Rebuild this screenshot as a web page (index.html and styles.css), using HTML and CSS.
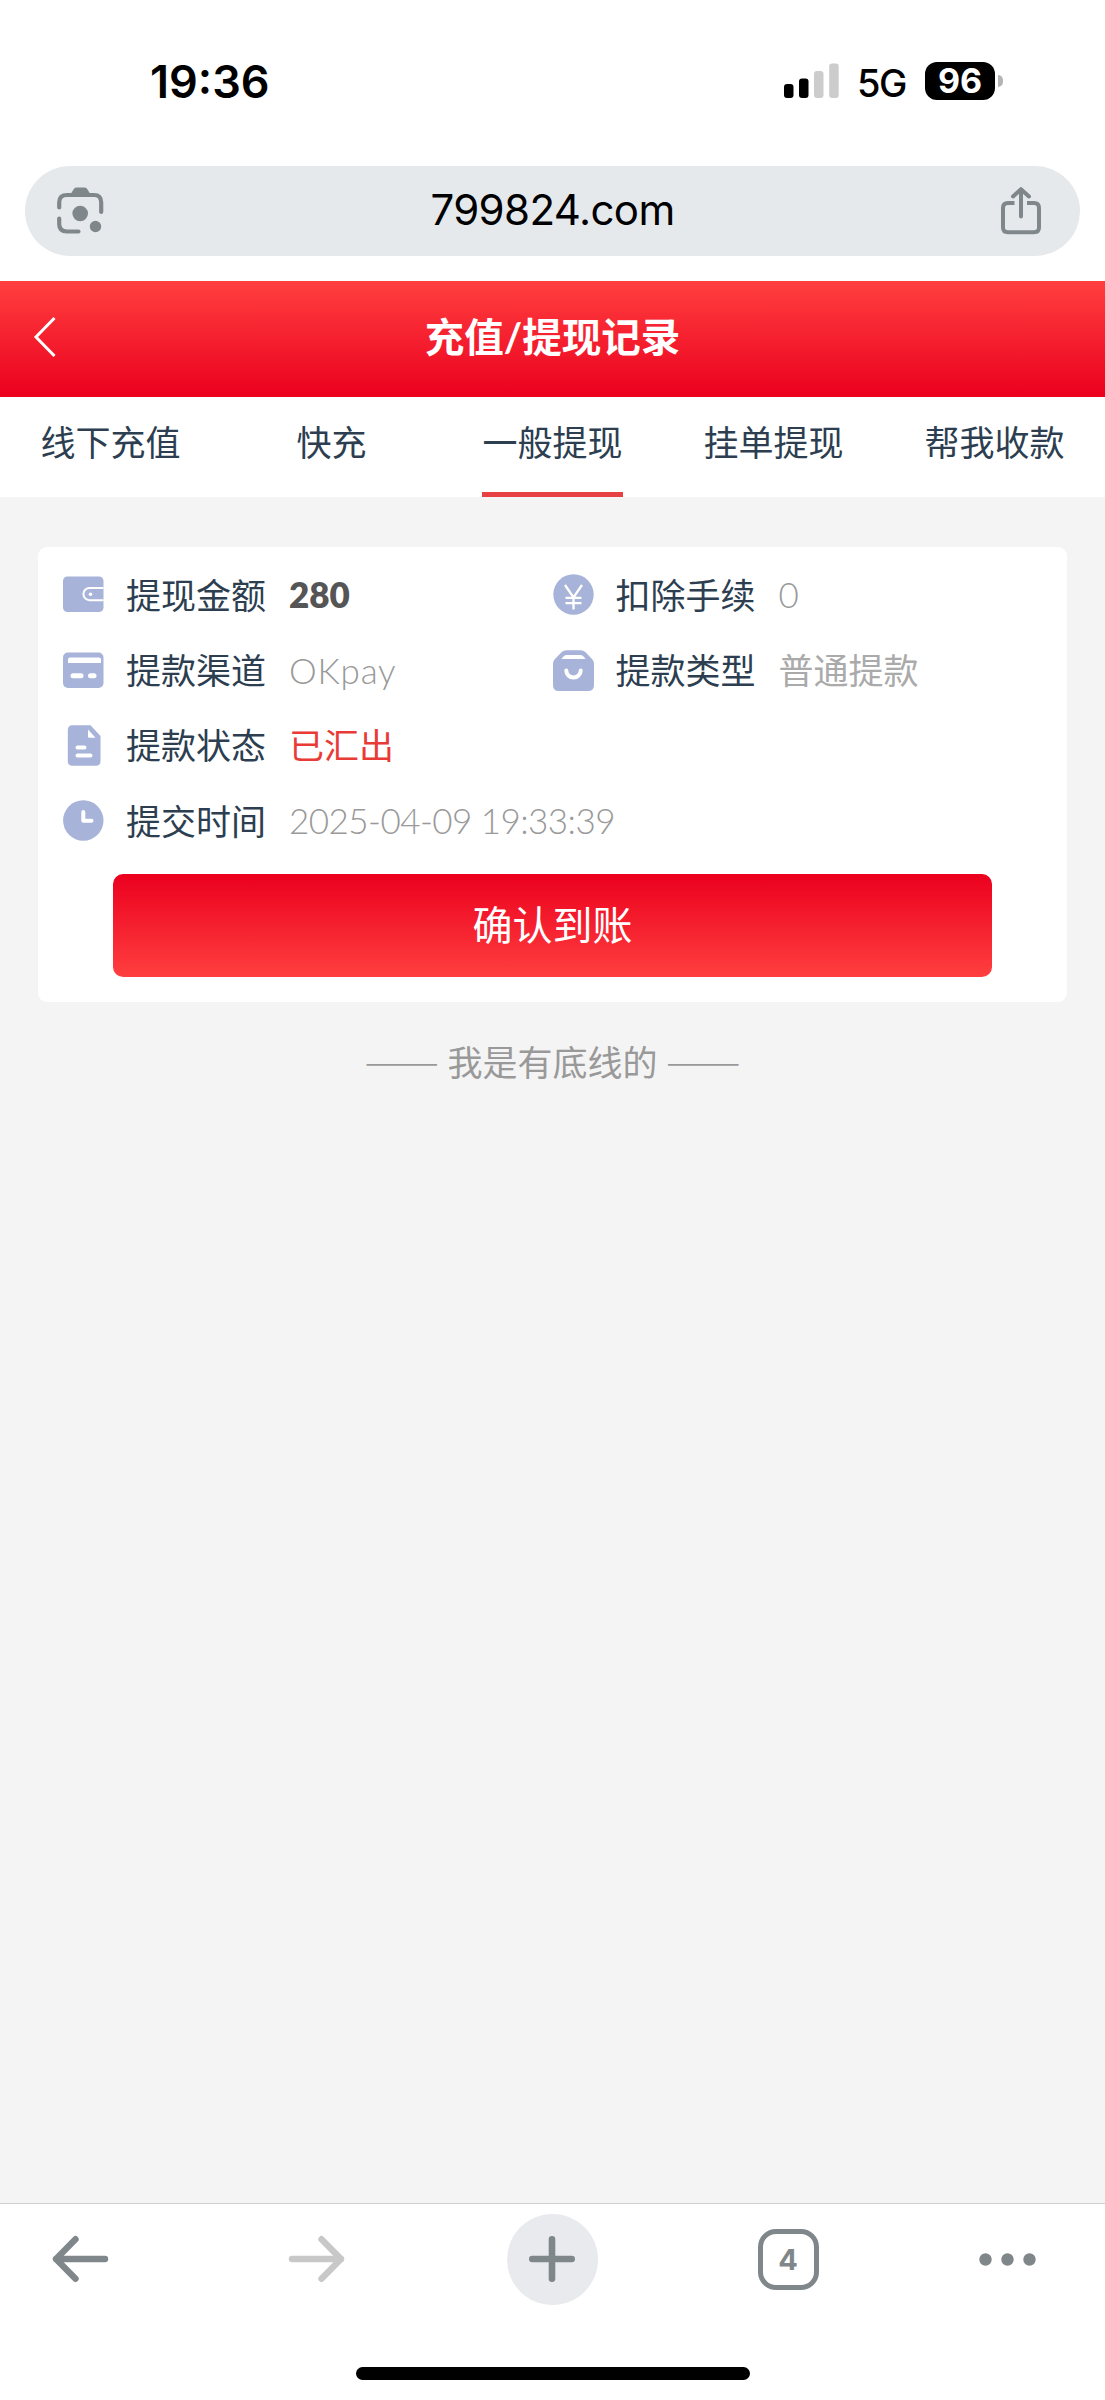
FILE: index.html
```html
<!DOCTYPE html>
<html lang="zh-CN">
<head>
<meta charset="utf-8">
<title>充值/提现记录</title>
<link rel="stylesheet" href="styles.css">
</head>
<body>
<div class="statusbar">
  <span class="clock">19:36</span>
  <div class="indicators">
    <svg class="signal" width="55" height="36" viewBox="0 0 55 36">
      <rect x="0" y="21" width="9.5" height="14" rx="3"/>
      <rect x="15" y="15.5" width="9.5" height="19.5" rx="3"/>
      <rect class="off" x="30" y="8" width="9.5" height="27" rx="3"/>
      <rect class="off" x="45.2" y="0.5" width="9.5" height="34.5" rx="3"/>
    </svg>
    <span class="network">5G</span>
    <span class="battery">96</span>
    <span class="battery-tip"></span>
  </div>
</div>
<div class="urlbar">
  <svg class="lens" width="48" height="48" viewBox="0 0 48 48">
    <path d="M14 6.5 17 1.8Q18 .5 19.5 .5H27.500Q29 .5 30 1.800L33 6.500Z" fill="#80878a"/>
    <path d="M2.200 20.500V15.500Q2.200 8 10 8H37Q44.200 8 44.200 15.500V25M2.200 31.500V37Q2.200 44.500 10 44.500H21.500" fill="none" stroke="#80878a" stroke-width="4.200" stroke-linecap="round"/>
    <circle cx="23.200" cy="26.500" r="7.800" fill="#80878a"/>
    <circle cx="38.500" cy="39.500" r="5.700" fill="#80878a"/>
  </svg>
  <span class="url">799824.com</span>
  <svg class="share" width="42" height="48" viewBox="0 0 42 48" fill="none" stroke="#80878a" stroke-width="4">
    <path d="M14.500 16H8Q3 16 3 21V40.500Q3 45.200 8 45.200H34Q39 45.200 39 40.500V21Q39 16 34 16H27"/>
    <path d="M21 29.500V2.500M13 9.500 21 2.200 29 9.500" stroke-linecap="round" stroke-linejoin="round"/>
  </svg>
</div>
<header class="header">
  <svg class="back" width="24" height="42" viewBox="0 0 24 42"><path d="M21.500 2 3 21 21.500 40" fill="none" stroke="#fff" stroke-width="3"/></svg>
  <h1 class="title">充值/提现记录</h1>
</header>
<nav class="tabs">
  <a class="tab"><span class="tab-label">线下充值</span></a>
  <a class="tab"><span class="tab-label">快充</span></a>
  <a class="tab"><span class="tab-label tab-active">一般提现</span></a>
  <a class="tab"><span class="tab-label">挂单提现</span></a>
  <a class="tab"><span class="tab-label">帮我收款</span></a>
</nav>
<main class="content">
  <section class="card">
    <div class="fields">
      <div class="field">
        <svg class="icon" viewBox="0 0 41 41"><rect x="0" y="2.500" width="40.500" height="35.500" rx="4.500" fill="#a7b3d9"/><path d="M40.500 14H26.500a6.100 6.100 0 0 0 0 12.200H40.500" fill="none" stroke="#fff" stroke-width="2"/><circle cx="27.500" cy="20.200" r="1.800" fill="#fff"/></svg>
        <span class="label">提现金额</span><span class="value amount">280</span>
      </div>
      <div class="field">
        <svg class="icon" viewBox="0 0 41 41"><circle cx="20.500" cy="20.500" r="20.200" fill="#a7b3d9"/><path d="M12 11 20.500 23.500 29 11M20.500 23V35.500M12.500 23.800H28.500M12.500 29.200H28.500" fill="none" stroke="#fff" stroke-width="2.300"/></svg>
        <span class="label">扣除手续</span><span class="value number">0</span>
      </div>
      <div class="field">
        <svg class="icon" viewBox="0 0 41 41"><rect x="0" y="2.500" width="40.500" height="35.500" rx="5" fill="#a7b3d9"/><path d="M5 13V9.500Q5 7.500 7 7.500H36Q38 7.500 38 9.500V13Z" fill="#fff"/><path d="M10 25.700H18M27.500 25.700H31" stroke="#fff" stroke-width="5" stroke-linecap="round"/></svg>
        <span class="label">提款渠道</span><span class="value channel">OKpay</span>
      </div>
      <div class="field">
        <svg class="icon" viewBox="0 0 41 41"><path d="M0 13.500Q0 11 2 9L8.500 2.200Q10.500 .2 13.500 .2H27.500Q30.500 .2 32.500 2.200L39 9Q41 11 41 13.500V35Q41 41 35 41H6Q0 41 0 35Z" fill="#a7b3d9"/><path d="M8.500 9Q11 5 13.500 5H27.500Q30 5 32.500 9Z" fill="#fff"/><path d="M13.300 20.500a7.200 7 0 0 0 14.400 0" fill="none" stroke="#fff" stroke-width="4" stroke-linecap="round"/></svg>
        <span class="label">提款类型</span><span class="value">普通提款</span>
      </div>
      <div class="field field-wide">
        <svg class="icon" viewBox="0 0 41 41"><path d="M4.800 5Q4.800 .2 9.500 .2H27.500L37.500 11V36Q37.500 40.800 33 40.800H9.500Q4.800 40.800 4.800 36Z" fill="#a7b3d9"/><path d="M25 4.500V11.500Q25 12.700 26.200 12.700H32.500Z" fill="#fff"/><path d="M14.500 22.500H21.500M14.500 30.500H27.500" stroke="#fff" stroke-width="4" stroke-linecap="round"/></svg>
        <span class="label">提款状态</span><span class="value status">已汇出</span>
      </div>
      <div class="field field-wide">
        <svg class="icon" viewBox="0 0 41 41"><circle cx="20.300" cy="20.500" r="20.200" fill="#a7b3d9"/><path d="M20.300 12V20.700H28.500" fill="none" stroke="#fff" stroke-width="4" stroke-linecap="round" stroke-linejoin="round"/></svg>
        <span class="label">提交时间</span><span class="value date">2025-04-09 19:33:39</span>
      </div>
    </div>
    <button class="confirm">确认到账</button>
  </section>
  <p class="end"><span class="dash">——</span> 我是有底线的 <span class="dash">——</span></p>
</main>
<footer class="toolbar">
  <div class="tools">
    <div class="tool"><svg width="57" height="50" viewBox="0 0 57 50" fill="none" stroke="#80878a" stroke-width="6.400" stroke-linecap="round" stroke-linejoin="round"><path d="M53 25H4M23.500 5.200 4 25 23.500 44.800"/></svg></div>
    <div class="tool"><svg width="57" height="50" viewBox="0 0 57 50" fill="none" stroke="#c8c8c8" stroke-width="6.400" stroke-linecap="round" stroke-linejoin="round"><path d="M4 25H53M33.500 5.200 53 25 33.500 44.800"/></svg></div>
    <div class="tool"><span class="new-tab"><svg width="46" height="46" viewBox="0 0 46 46" stroke="#80878a" stroke-width="6.600" stroke-linecap="round"><path d="M3.300 23H42.700M23 3.300V42.700"/></svg></span></div>
    <div class="tool"><span class="tab-count">4</span></div>
    <div class="tool tool-more"><svg width="57" height="13" viewBox="0 0 57 13" fill="#80878a"><circle cx="6.500" cy="6.500" r="6.200"/><circle cx="28.500" cy="6.500" r="6.200"/><circle cx="50.500" cy="6.500" r="6.200"/></svg></div>
  </div>
  <div class="home-indicator"></div>
</footer>
</body>
</html>
```
FILE: styles.css
```css
* { box-sizing: border-box; }
body {
  margin: 0;
  width: 1105px;
  height: 2400px;
  display: flex;
  flex-direction: column;
  background: #fff;
  color: #2c3e50;
  font-family: Lato, "Noto Sans CJK SC", sans-serif;
  font-size: 35px;
}
svg { display: block; flex: none; }

.statusbar {
  height: 166px;
  flex: none;
  display: flex;
  justify-content: space-between;
  padding: 57px 102px 0 150px;
  color: #000;
  font-family: Inter, sans-serif;
}
.clock { font-size: 45px; font-weight: 600; line-height: 50px; }
.indicators { display: flex; align-items: flex-start; }
.signal { margin-top: 6px; }
.signal .off { fill: #ccc; }
.network { width: 86px; padding-left: 18px; font-size: 38px; font-weight: 500; line-height: 52px; letter-spacing: -1.5px; white-space: nowrap; }
.battery {
  width: 70px;
  height: 38px;
  margin-top: 5px;
  border-radius: 12px;
  background: #000;
  color: #fff;
  font-size: 34px;
  font-weight: 700;
  line-height: 38px;
  text-align: center;
}
.battery-tip { width: 5px; height: 12px; margin: 18px 0 0 3px; border-radius: 0 5px 5px 0; background: #b5b5b5; }

.urlbar {
  height: 90px;
  flex: none;
  margin: 0 25px 25px;
  padding: 0 38px 0 32px;
  border-radius: 45px;
  background: #e6e9ec;
  display: flex;
  align-items: center;
  justify-content: space-between;
}
.url { color: #000; font-family: Inter, sans-serif; font-size: 42px; line-height: 50px; letter-spacing: -0.6px; margin-top: -3px; }

.header {
  height: 116px;
  flex: none;
  padding: 0 33px;
  display: grid;
  grid-template-columns: 24px 1fr 24px;
  align-items: center;
  background: linear-gradient(#ff3f3f, #eb001e);
}
.back { margin-top: -4px; }
.title { margin: -5px 0 0; color: #fff; font-size: 39.5px; font-weight: 700; line-height: 60px; text-align: center; }

.tabs { height: 100px; flex: none; display: grid; grid-template-columns: repeat(5, 1fr); background: #fff; }
.tab { display: flex; justify-content: center; }
.tab-label { height: 100px; line-height: 90px; border-bottom: 5px solid transparent; }
.tab-active { border-color: #e84144; }

.content { flex: 1; padding: 50px 38px 0; background: #f4f4f4; }
.card { height: 455px; padding: 10px 25px 0; border-radius: 9px; background: #fff; }
.fields { display: grid; grid-template-columns: 489.5px 1fr; grid-auto-rows: 75.4px; }
.field { display: flex; align-items: center; white-space: nowrap; }
.field-wide { grid-column: 1 / -1; }
.icon { width: 41px; height: 41px; margin-right: 22px; }
.label { width: 163px; padding-bottom: 3px; }
.value { padding-bottom: 3px; color: #aaa; }
.number, .channel, .date { padding-bottom: 1px; color: #999; font-weight: 300; }
.channel { letter-spacing: 0.8px; }
.date { letter-spacing: -0.55px; }
.amount { padding-bottom: 1px; color: #555; font-weight: 800; }
.status { color: #e93b35; }
.confirm {
  display: block;
  width: 879px;
  height: 103px;
  margin: 15px auto 0;
  padding: 0 0 4px;
  border: 0;
  border-radius: 10px;
  background: linear-gradient(#eb001e, #ff3f3f);
  color: #fff;
  font-family: inherit;
  font-size: 40px;
}
.end { margin: 34px 0 0; color: #999; font-family: "Noto Sans CJK SC", sans-serif; line-height: 50px; text-align: center; }
.dash { font-size: 38px; font-weight: 500; line-height: 1; vertical-align: -3px; }

.toolbar { height: 197px; flex: none; border-top: 1px solid #cfd0d1; background: #fff; }
.tools { height: 110px; display: flex; gap: 145px; padding: 0 34.5px; }
.tool { width: 91px; flex: none; display: flex; align-items: center; justify-content: center; }
.tool-more { width: 57px; }
.new-tab { width: 91px; height: 91px; border-radius: 50%; background: #e8eaee; display: flex; align-items: center; justify-content: center; }
.tab-count {
  width: 61px;
  height: 61px;
  border: 5.500px solid #80878a;
  border-radius: 18px;
  color: #80878a;
  font-family: Inter, sans-serif;
  font-size: 29px;
  font-weight: 700;
  line-height: 51px;
  text-align: center;
}
.home-indicator { width: 394px; height: 13px; margin: 53px auto 0; border-radius: 7px; background: #000; }
```
